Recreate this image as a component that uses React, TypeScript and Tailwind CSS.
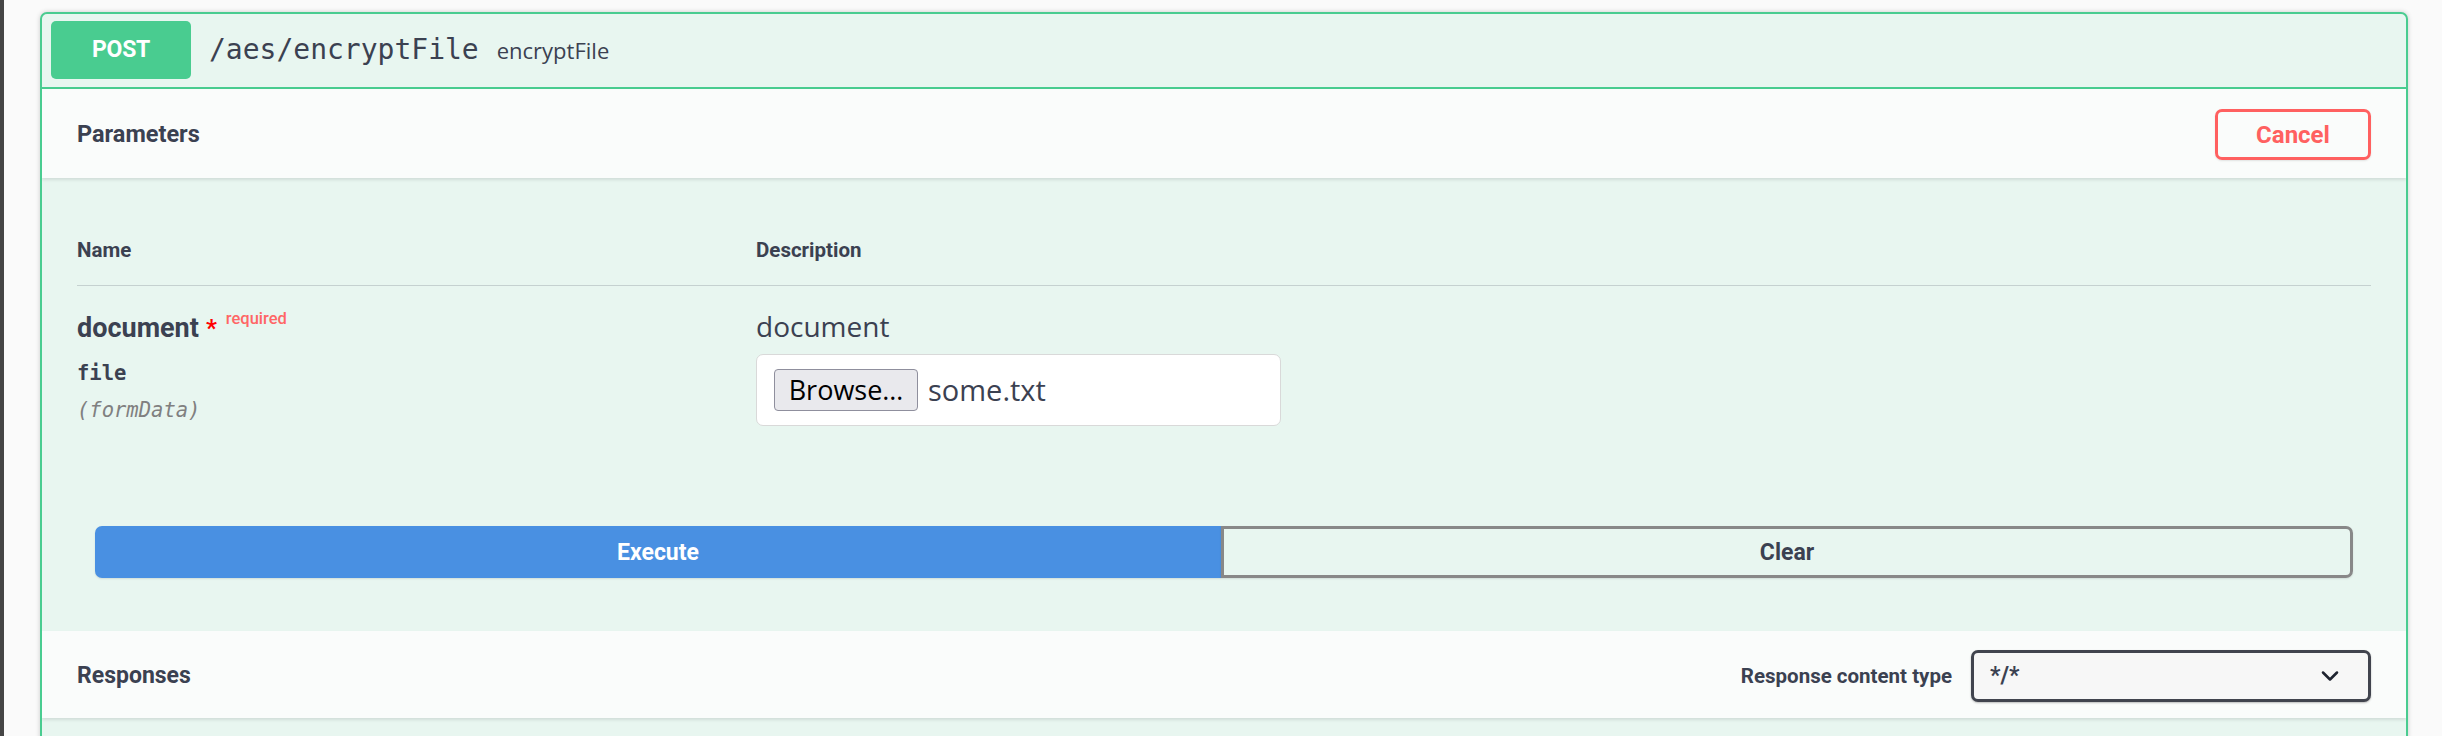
import { ChevronDown } from "lucide-react";

const text = "text-[#3b4151]";
const title = "font-['Roboto',sans-serif] font-bold";
const mono = "font-['DejaVu_Sans_Mono',monospace]";

export default function App() {
  return (
    <div className="flex h-[736px] w-[2442px] overflow-hidden bg-[#fafafa]">
      <div className="w-[4px] shrink-0 bg-[#454545]" />
      <div className="flex-1 pl-[36px] pr-[34px] pt-[12px]">
        <div className="overflow-hidden rounded-[7px] border-2 border-[#49cc90] bg-[#e8f6f0] shadow-[0_0_5px_rgba(0,0,0,0.19)]">
          {/* summary */}
          <div className="flex items-center border-b-2 border-[#49cc90] pb-[8px] pl-[9px] pt-[7px]">
            <div className={`flex h-[58px] w-[140px] items-center justify-center rounded-[5px] bg-[#49cc90] text-[23px] tracking-[-0.3px] text-white ${title}`}>
              POST
            </div>
            <span className={`ml-[18px] ${mono} text-[28px] ${text}`}>/aes/encryptFile</span>
            <span className={`ml-[18px] font-['Open_Sans',sans-serif] text-[22px] ${text}`}>encryptFile</span>
          </div>

          {/* parameters header */}
          <div className="flex h-[89px] items-center justify-between bg-[#fafcfb] px-[35px] pt-[2px] shadow-[0_2px_3px_rgba(0,0,0,0.1)]">
            <h4 className={`text-[23.5px] ${title} ${text}`}>Parameters</h4>
            <button className={`h-[51px] w-[156px] rounded-[7px] border-[3px] border-[#ff6060] bg-transparent text-[24px] text-[#ff6060] shadow-[0_1px_2px_rgba(0,0,0,0.1)] ${title}`}>
              Cancel
            </button>
          </div>

          {/* table */}
          <div className="px-[35px] pt-[36px]">
            <div className={`flex h-[72px] items-center border-b border-[#3b4151]/20 pt-[2px] text-[20.5px] ${title} ${text}`}>
              <div className="w-[679px]">Name</div>
              <div>Description</div>
            </div>
            <div className="flex h-[140px] pt-[18px]">
              <div className="w-[679px]">
                <div className={`flex h-[48px] items-center ${text}`}>
                  <span className={`text-[27px] ${title}`}>document</span>
                  <span className={`ml-[7px] text-[24px] text-[#ff0000] ${title}`}>*</span>
                  <span className="relative -top-[9px] ml-[9px] font-['Roboto',sans-serif] text-[16.5px] font-medium text-[#ff6666]">
                    required
                  </span>
                </div>
                <div className={`flex h-[42px] items-center ${mono} text-[20.5px] font-semibold ${text}`}>file</div>
                <div className={`flex h-[32px] items-center ${mono} text-[20.5px] italic text-[#808080]`}>(formData)</div>
              </div>
              <div className="flex flex-col">
                <div className={`flex h-[44px] items-center font-['Open_Sans',sans-serif] text-[28px] ${text}`}>document</div>
                <div className="mt-[6px] flex h-[72px] w-[525px] items-center rounded-[7px] border border-[#d9d9d9] bg-white pl-[17px]">
                  <span className="flex h-[42px] w-[144px] items-center justify-center rounded-[4px] border border-[#8f8f9d] bg-[#e9e9ed] font-['Open_Sans',sans-serif] text-[27px] text-black">
                    Browse…
                  </span>
                  <span className={`ml-[10px] font-['Open_Sans',sans-serif] text-[29px] ${text}`}>some.txt</span>
                </div>
              </div>
            </div>
          </div>

          {/* execute */}
          <div className="flex px-[53px] pb-[53px] pt-[100px]">
            <button className={`h-[52px] flex-1 rounded-l-[7px] bg-[#4990e2] pt-[2px] text-[23px] text-white shadow-[0_1px_2px_rgba(0,0,0,0.1)] ${title}`}>
              Execute
            </button>
            <button className={`h-[52px] flex-1 rounded-r-[7px] border-[3px] border-[#888888] bg-transparent pt-[2px] text-[23px] shadow-[0_1px_2px_rgba(0,0,0,0.1)] ${title} ${text}`}>
              Clear
            </button>
          </div>

          {/* responses header */}
          <div className="flex h-[87px] items-center justify-between bg-[#fafcfb] px-[35px] pt-[3px] shadow-[0_2px_3px_rgba(0,0,0,0.1)]">
            <h4 className={`text-[23px] ${title} ${text}`}>Responses</h4>
            <div className="flex items-center">
              <span className={`mr-[19px] text-[20.5px] ${title} ${text}`}>Response content type</span>
              <div className="flex h-[52px] w-[400px] items-center justify-between rounded-[7px] border-[3px] border-[#41444e] bg-[#f7f7f7] pl-[16px] pr-[24px] shadow-[0_1px_2px_rgba(0,0,0,0.25)]">
                <span className={`text-[23px] ${title} ${text}`}>*/*</span>
                <ChevronDown className="h-[28px] w-[28px] text-[#1f2430]" strokeWidth={2.2} />
              </div>
            </div>
          </div>
          <div className="h-[80px]" />
        </div>
      </div>
    </div>
  );
}
